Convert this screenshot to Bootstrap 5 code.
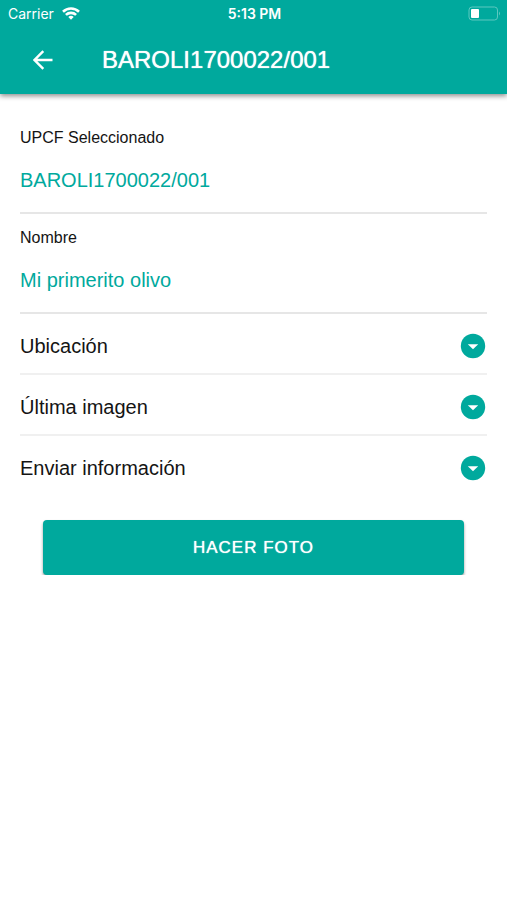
<!DOCTYPE html>
<html lang="es">
<head>
<meta charset="utf-8">
<meta name="viewport" content="width=device-width, initial-scale=1">
<title>BAROLI1700022/001</title>
<link href="https://cdn.jsdelivr.net/npm/bootstrap@5.3.0/dist/css/bootstrap.min.css" rel="stylesheet">
<style>
  :root { --teal: #00a99d; }
  body { font-family: "Liberation Sans", Arial, sans-serif; color: #141414; background: #fff; }
  .app-header { background: var(--teal); color: #fff; box-shadow: 0 2px 5px rgba(0, 0, 0, .45); }
  .status-bar { height: 27px; padding: 0 6px 0 8px; font: 600 14px/27px Inter, sans-serif; }
  .status-bar .carrier { font-weight: 400; }
  .title-bar { height: 67px; padding: 0 20px 2px; gap: 36px; }
  .back-btn { width: 46px; height: 46px; color: #fff; }
  .page-title { font-size: 24px; line-height: 28px; text-shadow: 0 0 1px #fff; }
  .content { padding: 20px 20px 0; }
  .field { border-bottom: 2px solid #e6e6e6; height: 100px; padding: 12px 0 0; }
  .field label { font-size: 16px; line-height: 24px; }
  .field input { font-size: 20px; line-height: 24px; color: var(--teal); margin-top: 18px; }
  .field input:focus { outline: 2px solid var(--teal); }
  .section-btn { height: 61px; padding: 5px 1px 0 0; font-size: 20px; line-height: 24px; color: inherit; border-bottom: 2px solid #f0f0f0; }
  .section-btn:last-of-type { border-bottom-color: transparent; }
  .photo-btn { --bs-btn-color: #fff; --bs-btn-bg: var(--teal); --bs-btn-hover-color: #fff; --bs-btn-hover-bg: #00968b; height: 55px; font-size: 17px; letter-spacing: 1px; text-shadow: 0 0 1px #fff; border: 0; border-radius: 4px; box-shadow: 0 2px 3px rgba(0, 0, 0, .4); }
  .action { padding: 23px 23px 0; }
</style>
</head>
<body>
<header class="app-header">
  <div class="status-bar row g-0 align-items-center">
    <div class="col d-flex align-items-center gap-2">
      <span class="carrier">Carrier</span>
      <svg width="18" height="13" viewBox="0 0 18 13" fill="none" stroke="#fff" stroke-width="2.6" aria-hidden="true"><path d="M1 4.8a11.5 11.5 0 0 1 16 0M3.9 7.9a7.4 7.4 0 0 1 10.2 0"/><path d="M6.3 10.1a4 4 0 0 1 5.4 0L9 12.8z" fill="#fff" stroke="none"/></svg>
    </div>
    <div class="col-auto">5:13 PM</div>
    <div class="col d-flex justify-content-end">
      <svg width="33" height="15" viewBox="0 0 33 15" aria-hidden="true"><rect x="1" y="1" width="28.5" height="13" rx="3" fill="none" stroke="#5cc8c0"/><rect x="3" y="3" width="8" height="9" rx="1" fill="#fff"/><path d="M31 5.5q2 2 0 4z" fill="#5cc8c0"/></svg>
    </div>
  </div>
  <div class="title-bar d-flex align-items-center">
    <button type="button" class="back-btn btn p-0 border-0 d-flex align-items-center justify-content-center" aria-label="Volver">
      <svg width="20" height="20" viewBox="0 0 20 20" fill="none" stroke="#fff" stroke-width="2.4" aria-hidden="true"><path d="M19.5 10H2M10.3 1.2L1.5 10l8.8 8.8"/></svg>
    </button>
    <h1 class="page-title m-0 fw-normal">BAROLI1700022/001</h1>
  </div>
</header>
<main class="content">
  <div class="field">
    <label for="upcf" class="d-block">UPCF Seleccionado</label>
    <input id="upcf" type="text" class="d-block w-100 border-0 p-0 bg-transparent" value="BAROLI1700022/001" readonly>
  </div>
  <div class="field">
    <label for="nombre" class="d-block">Nombre</label>
    <input id="nombre" type="text" class="d-block w-100 border-0 p-0 bg-transparent" value="Mi primerito olivo">
  </div>
  <button type="button" class="section-btn d-flex w-100 align-items-center justify-content-between bg-transparent border-top-0 border-start-0 border-end-0" aria-expanded="false">
    Ubicación
    <svg width="26" height="26" viewBox="0 0 26 26" aria-hidden="true"><circle cx="13" cy="13" r="12.2" fill="#00a99d"/><path d="M7.8 11.2h10.4L13 16.2z" fill="#fff"/></svg>
  </button>
  <button type="button" class="section-btn d-flex w-100 align-items-center justify-content-between bg-transparent border-top-0 border-start-0 border-end-0" aria-expanded="false">
    Última imagen
    <svg width="26" height="26" viewBox="0 0 26 26" aria-hidden="true"><circle cx="13" cy="13" r="12.2" fill="#00a99d"/><path d="M7.8 11.2h10.4L13 16.2z" fill="#fff"/></svg>
  </button>
  <button type="button" class="section-btn d-flex w-100 align-items-center justify-content-between bg-transparent border-top-0 border-start-0 border-end-0" aria-expanded="false">
    Enviar información
    <svg width="26" height="26" viewBox="0 0 26 26" aria-hidden="true"><circle cx="13" cy="13" r="12.2" fill="#00a99d"/><path d="M7.8 11.2h10.4L13 16.2z" fill="#fff"/></svg>
  </button>
  <div class="action">
    <button type="button" class="photo-btn btn w-100">HACER FOTO</button>
  </div>
</main>
<script src="https://cdn.jsdelivr.net/npm/bootstrap@5.3.0/dist/js/bootstrap.bundle.min.js"></script>
</body>
</html>
